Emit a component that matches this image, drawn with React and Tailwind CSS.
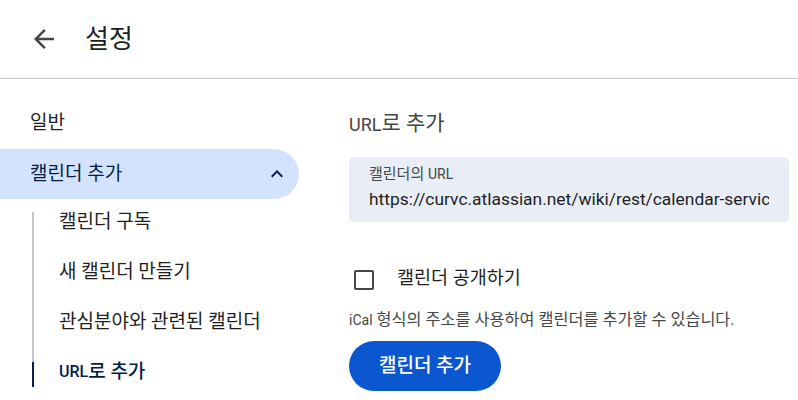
import { useState } from 'react';

const font = { fontFamily: 'Roboto, "Noto Sans CJK KR", sans-serif' };

function ArrowBack() {
  return (
    <svg width="30" height="30" viewBox="0 0 24 24" fill="#444746">
      <path d="M20 11H7.83l5.59-5.59L12 4l-8 8 8 8 1.41-1.41L7.83 13H20v-2z" />
    </svg>
  );
}

function ChevronUp() {
  return (
    <svg width="24" height="24" viewBox="0 0 24 24" fill="#041e49">
      <path d="M7.41 15.41 12 10.83l4.59 4.58L18 14l-6-6-6 6z" />
    </svg>
  );
}

const subItems = [
  { label: '캘린더 구독' },
  { label: '새 캘린더 만들기' },
  { label: '관심분야와 관련된 캘린더' },
  { latin: 'URL', label: '로 추가', active: true },
];

export default function App() {
  const [isPublic, setIsPublic] = useState(false);

  return (
    <div className="h-[400px] w-[798px] overflow-hidden bg-white text-[#1f1f1f]" style={font}>
      <header className="flex h-[79px] items-center border-b border-[#c7c7c7] pl-[29px]">
        <button type="button" className="flex h-[30px] w-[30px] items-center justify-center">
          <ArrowBack />
        </button>
        <h1 className="ml-[26px] text-[26px] leading-none text-[#1f1f1f]">설정</h1>
      </header>

      <div className="flex">
        <nav className="w-[299px] shrink-0 pt-[20px]">
          <div className="flex h-[48px] items-center pl-[30px] text-[19px]">일반</div>
          <div className="mt-[2px] flex h-[50px] items-center justify-between rounded-r-full bg-[#d3e3fd] pl-[30px] pr-[10px] text-[19px] text-[#041e49]">
            <span>캘린더 추가</span>
            <ChevronUp />
          </div>
          <div className="flex pl-[32px]">
            <div className="flex w-[2px] flex-col">
              <div className="h-[13px]" />
              <div className="h-[150px] bg-[#c4c7c5]" />
              <div className="h-[25px] bg-[#041e49]" />
            </div>
            <ul className="-mt-[2px] flex flex-col pl-[25px]">
              {subItems.map((item) => (
                <li
                  key={item.label}
                  className={`flex h-[50px] items-center text-[19px] ${
                    item.active ? 'font-medium text-[#041e49]' : 'text-[#1f1f1f]'
                  }`}
                >
                  {item.latin && <span className="text-[16px]">{item.latin}</span>}
                  {item.label}
                </li>
              ))}
            </ul>
          </div>
        </nav>

        <main className="ml-[50px] w-[440px] pt-[33px]">
          <h2 className="flex h-[24px] items-center text-[21px] text-[#444746]">
            <span className="text-[18px]">URL</span>로 추가
          </h2>
          <div className="mt-[21px] h-[65px] overflow-hidden rounded-[5px] bg-[#e9eef6] pl-[20px] pr-[20px] pt-[7px]">
            <div className="text-[15px] leading-[20px] text-[#444746]">
              캘린더의 <span className="text-[14px]">URL</span>
            </div>
            <div className="overflow-hidden whitespace-nowrap text-[17.4px] leading-[30px] text-[#1f1f1f]">
              https://curvc.atlassian.net/wiki/rest/calendar-services/1.0/calendar/export/subcalendar/private.ics
            </div>
          </div>

          <label className="mt-[48px] flex h-[20px] cursor-pointer items-center">
            <span className="ml-[5px] flex h-[20px] w-[20px] items-center justify-center rounded-[2px] border-2 border-[#444746]">
              {isPublic && <span className="h-[10px] w-[10px] bg-[#444746]" />}
            </span>
            <input
              type="checkbox"
              className="hidden"
              checked={isPublic}
              onChange={(e) => setIsPublic(e.target.checked)}
            />
            <span className="ml-[23px] -mt-[3px] text-[18.5px]">캘린더 공개하기</span>
          </label>

          <p className="mt-[20px] text-[16.3px] leading-[20px] text-[#444746]">
            <span className="text-[14px]">iCal</span> 형식의 주소를 사용하여 캘린더를 추가할 수 있습니다.
          </p>

          <button
            type="button"
            className="mt-[11px] h-[50px] w-[152px] rounded-full bg-[#0b57d0] text-[19px] font-medium text-white"
          >
            캘린더 추가
          </button>
        </main>
      </div>
    </div>
  );
}
